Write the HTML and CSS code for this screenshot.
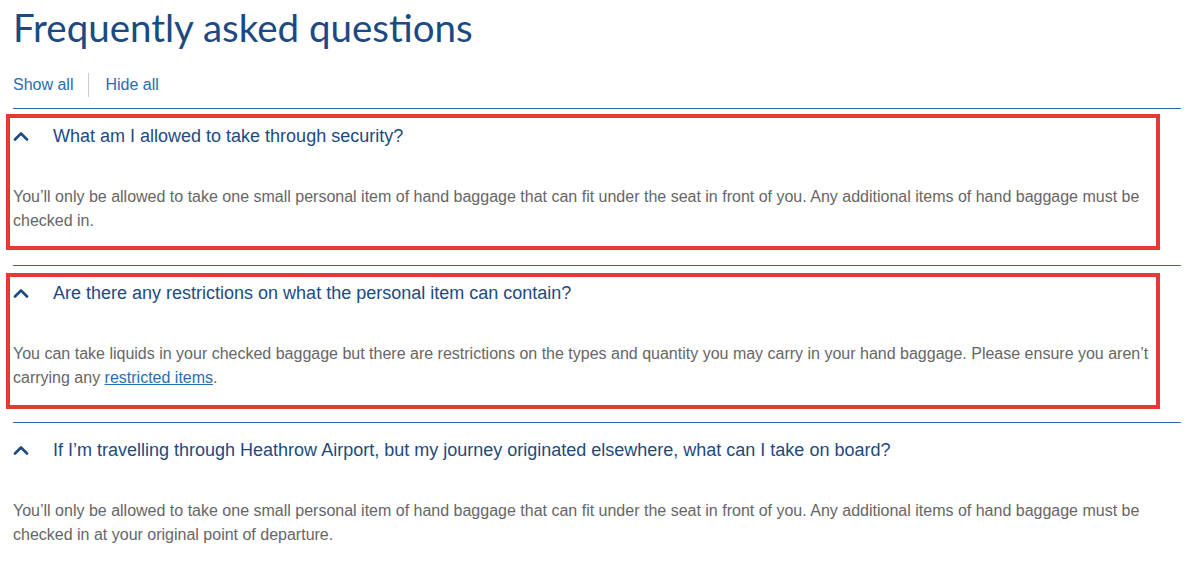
FILE: index.html
```html
<!DOCTYPE html>
<html lang="en">
<head>
<meta charset="utf-8">
<title>Frequently asked questions</title>
<link rel="stylesheet" href="styles.css">
</head>
<body>
<main class="faq">
  <h1 class="faq-title">Frequently asked questions</h1>
  <div class="toggles">
    <a class="toggle" href="#">Show all</a>
    <span class="toggle-sep"></span>
    <a class="toggle" href="#">Hide all</a>
  </div>
  <section class="item highlighted">
    <div class="q">
      <svg class="chev" width="16" height="10" viewBox="0 0 16 10"><polyline points="2,8.5 8,2.5 14,8.5" fill="none" stroke="#1d4a80" stroke-width="2.6" stroke-linecap="round" stroke-linejoin="round"/></svg>
      <span class="q-text">What am I allowed to take through security?</span>
    </div>
    <p class="a">You’ll only be allowed to take one small personal item of hand baggage that can fit under the seat in front of you. Any additional items of hand baggage must be checked in.</p>
    <span class="mark"></span>
  </section>
  <section class="item highlighted">
    <div class="q">
      <svg class="chev" width="16" height="10" viewBox="0 0 16 10"><polyline points="2,8.5 8,2.5 14,8.5" fill="none" stroke="#1d4a80" stroke-width="2.6" stroke-linecap="round" stroke-linejoin="round"/></svg>
      <span class="q-text">Are there any restrictions on what the personal item can contain?</span>
    </div>
    <p class="a">You can take liquids in your checked baggage but there are restrictions on the types and quantity you may carry in your hand baggage. Please ensure you aren’t carrying any <a class="link" href="#">restricted items</a>.</p>
    <span class="mark mark-second"></span>
  </section>
  <section class="item">
    <div class="q">
      <svg class="chev" width="16" height="10" viewBox="0 0 16 10"><polyline points="2,8.5 8,2.5 14,8.5" fill="none" stroke="#1d4a80" stroke-width="2.6" stroke-linecap="round" stroke-linejoin="round"/></svg>
      <span class="q-text">If I’m travelling through Heathrow Airport, but my journey originated elsewhere, what can I take on board?</span>
    </div>
    <p class="a">You’ll only be allowed to take one small personal item of hand baggage that can fit under the seat in front of you. Any additional items of hand baggage must be checked in at your original point of departure.</p>
  </section>
</main>
</body>
</html>
```

FILE: styles.css
```css
html, body {
  margin: 0;
  padding: 0;
  background: #ffffff;
}
body {
  font-family: "Liberation Sans", Arial, sans-serif;
}
.faq {
  width: 1168px;
  padding-left: 13px;
}
.faq-title {
  margin: 0;
  padding-top: 3px;
  height: 56px;
  font-family: Lato, "Open Sans", sans-serif;
  font-weight: 400;
  font-size: 38.5px;
  line-height: 48px;
  color: #1b4a82;
}
.toggles {
  display: flex;
  align-items: center;
  height: 46px;
  padding-top: 3px;
}
.toggle {
  font-size: 16px;
  color: #2a6cb0;
  text-decoration: none;
  line-height: 24px;
}
.toggle-sep {
  width: 1px;
  height: 24px;
  background: #cccccc;
  margin: 0 16px 0 15px;
}
.item {
  position: relative;
  border-top: 1px solid #2b6ca6;
  padding-bottom: 32px;
}
.q {
  display: flex;
  align-items: center;
  height: 54px;
}
.chev {
  flex: none;
  margin-right: 24px;
}
.q-text {
  font-size: 18px;
  color: #1d4a80;
}
.a {
  margin: 22px 0 0 0;
  font-size: 16px;
  line-height: 24px;
  color: #666666;
}
.link {
  color: #2a6cb0;
  text-decoration: underline;
}
.mark {
  position: absolute;
  left: -7px;
  top: 5px;
  width: 1146px;
  height: 128px;
  border: 4px solid #e53935;
  pointer-events: none;
}
.mark-second {
  top: 7px;
}
```
